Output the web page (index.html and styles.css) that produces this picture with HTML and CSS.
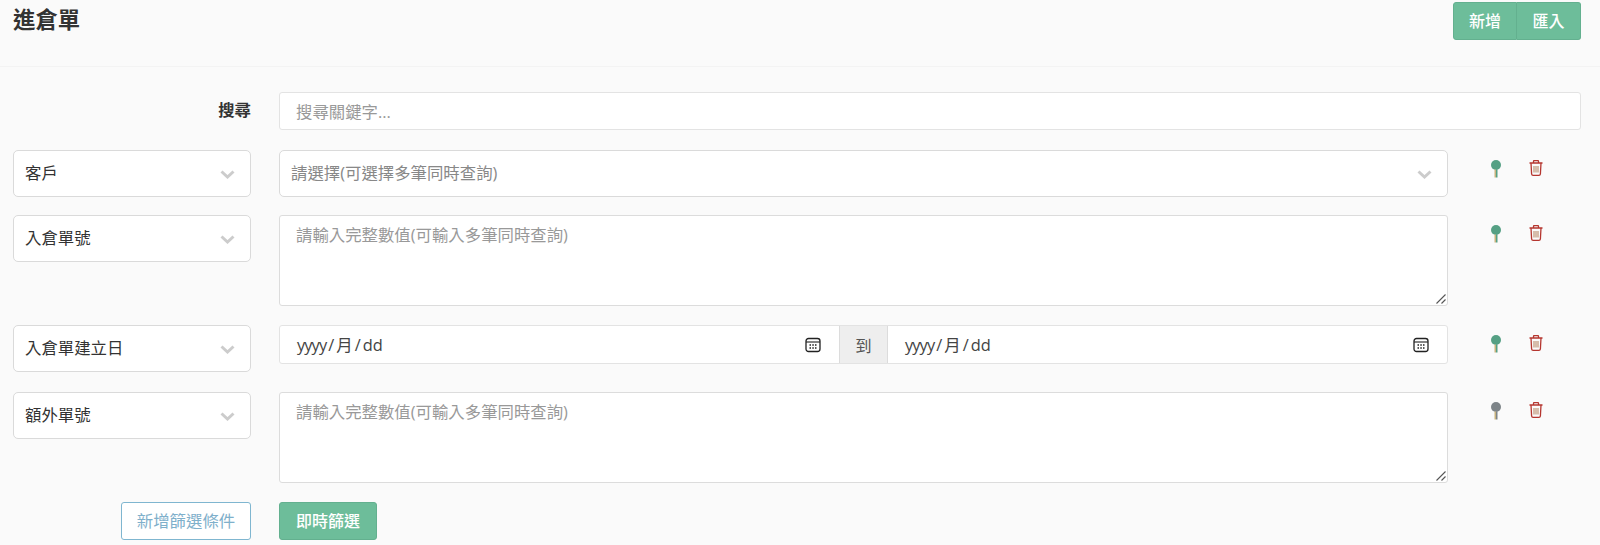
FILE: index.html
```html
<!DOCTYPE html>
<html lang="zh-TW">
<head>
<meta charset="utf-8">
<title>進倉單</title>
<link rel="stylesheet" href="styles.css">
</head>
<body>
<svg class="sprites" aria-hidden="true">
  <symbol id="chev" viewBox="0 0 15 9"><path d="M1.5 1.500 7.500 7 13.500 1.500" fill="none" stroke="currentColor" stroke-width="3"/></symbol>
  <symbol id="pin" viewBox="0 0 12 20"><circle cx="6" cy="5" r="5"/><rect x="4.500" y="9.500" width="1.500" height="8" fill="#c8b27c"/><rect x="6" y="9.500" width="1.500" height="8"/></symbol>
  <symbol id="trash" viewBox="0 0 14 16"><path d="M.5 3h13M4.500 3V1.500a1 1 0 0 1 1-1h3a1 1 0 0 1 1 1V3M2 3l.6 11a1.500 1.500 0 0 0 1.500 1.300h5.800A1.500 1.500 0 0 0 11.400 14L12 3" fill="none" stroke="#b5362f" stroke-width="1.300"/><path d="M5 6v6.500M7 6v6.500M9 6v6.500" stroke="#b98a6a" stroke-width="1.100"/></symbol>
  <symbol id="cal" viewBox="0 0 16 16"><rect x="1" y="1.500" width="14" height="13" rx="2.500" fill="none" stroke="#222" stroke-width="1.300"/><path d="M1 5h14" stroke="#222" stroke-width="1.100"/><path d="M4.500 8h1.500M7.300 8h1.500M10 8h1.500M4.500 11h1.500M7.300 11h1.500M10 11h1.500" stroke="#222" stroke-width="1.300"/></symbol>
  <symbol id="grip" viewBox="0 0 10 10"><path d="M.5 9.500 9.500.5M5.500 9.500 9.500 5.500" fill="none" stroke="#555" stroke-width="1.100"/></symbol>
</svg>
<header class="page-head">
  <h1 class="title">進倉單</h1>
  <div class="btn-group">
    <button class="btn btn-green">新增</button>
    <button class="btn btn-green">匯入</button>
  </div>
</header>
<main class="filters">
  <div class="row row-search">
    <label class="row-label">搜尋</label>
    <input class="field search-input" placeholder="搜尋關鍵字...">
  </div>
  <div class="row row-select">
    <div class="picker"><span>客戶</span><svg class="chev"><use href="#chev"/></svg></div>
    <div class="picker picker-wide"><span>請選擇(可選擇多筆同時查詢)</span><svg class="chev"><use href="#chev"/></svg></div>
    <div class="actions">
      <svg class="pin pin-on"><use href="#pin"/></svg>
      <svg class="trash"><use href="#trash"/></svg>
    </div>
  </div>
  <div class="row row-text">
    <div class="picker"><span>入倉單號</span><svg class="chev"><use href="#chev"/></svg></div>
    <div class="area-wrap">
      <textarea class="field area" placeholder="請輸入完整數值(可輸入多筆同時查詢)"></textarea>
      <svg class="grip"><use href="#grip"/></svg>
    </div>
    <div class="actions">
      <svg class="pin pin-on"><use href="#pin"/></svg>
      <svg class="trash"><use href="#trash"/></svg>
    </div>
  </div>
  <div class="row row-date">
    <div class="picker"><span>入倉單建立日</span><svg class="chev"><use href="#chev"/></svg></div>
    <div class="date-range">
      <div class="date-field"><span class="date-text"><span class="yyyy">yyyy</span><span class="slash">/</span>月<span class="slash">/</span>dd</span><svg class="cal"><use href="#cal"/></svg></div>
      <div class="date-sep">到</div>
      <div class="date-field"><span class="date-text"><span class="yyyy">yyyy</span><span class="slash">/</span>月<span class="slash">/</span>dd</span><svg class="cal"><use href="#cal"/></svg></div>
    </div>
    <div class="actions">
      <svg class="pin pin-on"><use href="#pin"/></svg>
      <svg class="trash"><use href="#trash"/></svg>
    </div>
  </div>
  <div class="row row-text">
    <div class="picker"><span>額外單號</span><svg class="chev"><use href="#chev"/></svg></div>
    <div class="area-wrap">
      <textarea class="field area" placeholder="請輸入完整數值(可輸入多筆同時查詢)"></textarea>
      <svg class="grip"><use href="#grip"/></svg>
    </div>
    <div class="actions">
      <svg class="pin pin-off"><use href="#pin"/></svg>
      <svg class="trash"><use href="#trash"/></svg>
    </div>
  </div>
  <div class="row row-buttons">
    <div class="add-wrap"><button class="btn btn-outline">新增篩選條件</button></div>
    <div><button class="btn btn-green btn-solo">即時篩選</button></div>
  </div>
</main>
</body>
</html>
```
FILE: styles.css
```css
* { box-sizing: border-box; }
html, body { margin: 0; height: 545px; overflow: hidden; }
body {
  background: #fafafa;
  color: #333;
  font-family: "Open Sans", "Noto Sans CJK TC", sans-serif;
  font-size: 16.4px;
}
.sprites { display: none; }
.page-head {
  height: 67px;
  padding: 2px 19px 0 13px;
  display: flex;
  justify-content: space-between;
  align-items: flex-start;
  border-bottom: 1px solid #f3f3f3;
}
.title { margin: 0; font-size: 22.4px; font-weight: 700; line-height: 35px; color: #333; }
.btn {
  font: inherit;
  font-size: 16px;
  height: 38px;
  padding: 0 15px;
  border-radius: 3px;
  cursor: pointer;
  line-height: 1;
}
.btn-green { background: #6dbd9a; border: 1px solid #63b08f; color: #fff; font-weight: 500; }
.btn-group { display: flex; }
.btn-group .btn:first-child { border-radius: 3px 0 0 3px; width: 64px; }
.btn-group .btn:last-child { border-radius: 0 3px 3px 0; border-left: 0; width: 64px; }
.btn-outline { background: #fff; border: 1px solid #7fb6d0; color: #7fb0cb; width: 130px; padding: 0; white-space: nowrap; font-size: 16.4px; }
.btn-solo { width: 98px; }
.add-wrap { text-align: right; }
.filters { padding: 25px 19px 0 13px; }
.row { display: grid; grid-template-columns: 238px 1169px 1fr; column-gap: 28px; align-items: start; }
.row-search { grid-template-columns: 238px 1302px; margin-bottom: 20px; }
.row-select { margin-bottom: 18px; }
.row-text { margin-bottom: 19px; }
.row-date { margin-bottom: 20px; }
.row-label { text-align: right; font-weight: 700; line-height: 36px; padding-right: 0; }
.field {
  display: block;
  width: 100%;
  background: #fff;
  border: 1px solid #e3e3e3;
  border-radius: 3px;
  font: inherit;
  color: #333;
  padding: 6px 16px;
  outline: none;
}
.field::placeholder { color: #999; opacity: 1; }
.search-input { height: 38px; }
.area-wrap { position: relative; }
.area { height: 91px; border-color: #dcdcdc; resize: none; }
.grip { position: absolute; right: 2px; bottom: 2px; width: 10px; height: 10px; }
.picker {
  height: 47px;
  background: #fff;
  border: 1px solid #dadada;
  border-radius: 5px;
  display: flex;
  align-items: center;
  justify-content: space-between;
  padding: 0 15px 0 11px;
}
.picker > span { margin-bottom: 3px; }
.picker-wide > span { color: #888; }
.chev { width: 15px; height: 9px; color: #ccc; margin-top: 2px; }
.actions { display: flex; gap: 27px; padding: 10px 0 0 14px; }
.pin { width: 12px; height: 20px; }
.pin-on { fill: #55a084; }
.pin-off { fill: #7d8488; }
.trash { width: 14px; height: 16px; }
.date-range {
  display: flex;
  height: 39px;
  background: #fff;
  border: 1px solid #e3e3e3;
  border-radius: 3px;
}
.date-field {
  flex: 1;
  display: flex;
  align-items: center;
  justify-content: space-between;
  padding: 0 18px 0 17px;
  color: #444;
}
.date-text { margin-bottom: 1px; }
.yyyy { letter-spacing: -.9px; }
.slash { margin: 0 2px; }
.date-sep {
  width: 49px;
  background: #eee;
  border-left: 1px solid #dcdcdc;
  border-right: 1px solid #dcdcdc;
  display: flex;
  align-items: center;
  justify-content: center;
  color: #555;
}
.cal { width: 16px; height: 16px; }
```
